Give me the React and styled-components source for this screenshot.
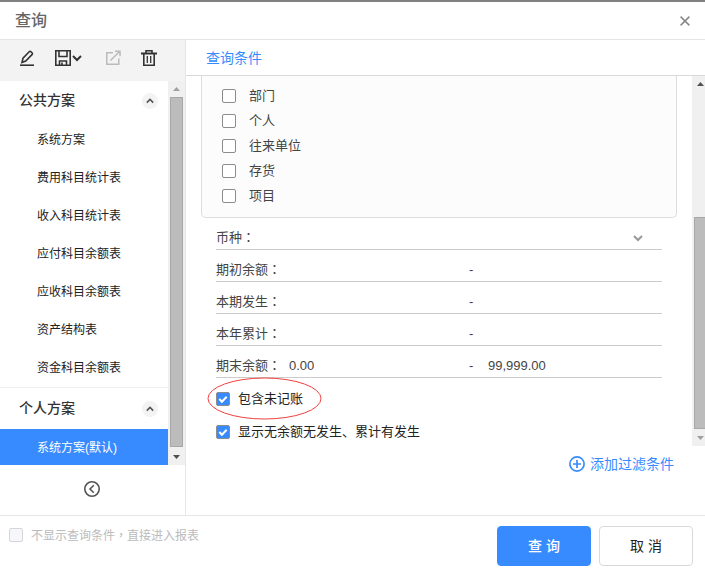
import { useState } from 'react'
import styled, { createGlobalStyle } from 'styled-components'


const GlobalStyle = createGlobalStyle`
    * {
        box-sizing: border-box;
    }

    body {
        margin: 0;
        font-family: 'Liberation Sans', 'Noto Sans CJK SC', sans-serif;
        font-size: 13px;
        line-height: 20px;
        color: #444;
        background-color: #fff;
    }

    button, input, select {
        font: inherit;
        color: inherit;
    }
`

const Dialog = styled.div`
    display: flex;
    flex-direction: column;
    height: 100vh;
    border-top: 2px solid #808080;
    overflow: hidden;
`

const Header = styled.header`
    display: flex;
    align-items: center;
    justify-content: space-between;
    height: 38px;
    padding: 0 15px;
    border-bottom: 1px solid #e6e6e6;
`

const Title = styled.h1`
    margin: 0;
    font-size: 16px;
    font-weight: 500;
    line-height: 24px;
    color: #666;
`

const IconButton = styled.button`
    display: flex;
    align-items: center;
    gap: 1px;
    padding: 0;
    border: 0;
    background: none;
    color: ${({$color}) => $color || '#333'};
    cursor: pointer;
`

const Body = styled.div`
    display: flex;
    flex: 1;
    min-height: 0;
`

const Sidebar = styled.aside`
    display: flex;
    flex-direction: column;
    width: 186px;
    flex-shrink: 0;
    border-right: 1px solid #e6e6e6;
`

const Toolbar = styled.div`
    display: flex;
    align-items: flex-start;
    gap: 20px;
    height: 41px;
    padding: 10px 19px;
    background-color: #f3f3f3;
`

const SaveButton = styled(IconButton)`
    padding-right: 3px;
`

const ScrollArea = styled.div`
    display: flex;
    flex: 1;
    min-height: 0;
`

const Plans = styled.nav`
    flex: 1;
    overflow: hidden;
`

const Group = styled.section`
    & + & {
        padding-top: 1px;
        border-top: 1px solid #eee;
    }
`

const GroupHeader = styled.div`
    display: flex;
    align-items: center;
    justify-content: space-between;
    height: 40px;
    padding: 0 10px 0 19px;
`

const GroupName = styled.h2`
    margin: 0;
    padding-bottom: 2px;
    font-size: 14px;
    font-weight: 500;
    color: #333;
`

const Toggle = styled(IconButton)`
    justify-content: center;
    width: 16px;
    height: 16px;
    border-radius: 50%;
    background-color: #f3f3f3;
`

const Plan = styled.a`
    display: block;
    padding-left: 37px;
    font-size: 12px;
    line-height: 38px;
    text-decoration: none;
    color: ${({$active}) => $active ? '#fff' : '#222'};
    background-color: ${({$active}) => $active ? '#388bff' : 'transparent'};
`

const Collapse = styled.div`
    display: flex;
    align-items: center;
    justify-content: center;
    height: 50px;
    padding: 0 2px 2px 0;
`

const Track = styled.div`
    display: flex;
    flex-direction: column;
    flex-shrink: 0;
    width: 17px;
    margin-right: ${({$cut}) => $cut ? '-4px' : '0'};
    background-color: #f0f0f0;
`

const Arrow = styled.span`
    display: flex;
    align-items: center;
    justify-content: center;
    height: 16px;
    color: ${({$muted}) => $muted ? '#a0a0a0' : '#505050'};
`

const Rail = styled.div`
    flex: ${({$space}) => $space};
`

const Thumb = styled.div`
    flex: ${({$size}) => $size};
    margin: 0 2px;
    border: 1px solid #a8a8a8;
    background-color: #bcbcbc;
`

const Main = styled.main`
    display: flex;
    flex-direction: column;
    flex: 1;
    min-width: 0;
`

const Tabs = styled.div`
    height: 36px;
    padding: 0 20px;
    border-bottom: 1px solid #d9d9d9;
`

const Tab = styled.button`
    padding: 0;
    border: 0;
    background: none;
    font-size: 14px;
    line-height: 36px;
    color: #388bff;
`

const Conditions = styled.form`
    flex: 1;
    min-width: 0;
    padding: 0 15px;
`

const Panel = styled.div`
    padding: 7px 20px 9px;
    border: 1px solid #ddd;
    border-top: 0;
    border-radius: 0 0 5px 5px;
    background-color: #fcfcfc;
`

const Check = styled.label`
    position: relative;
    display: flex;
    align-items: center;
    width: fit-content;
    gap: ${({$gap}) => $gap || '8px'};
    height: ${({$height}) => $height};
    font-size: ${({$size}) => $size || '13px'};
    color: ${({$color}) => $color || '#444'};
`

const Box = styled.input`
    appearance: none;
    width: 14px;
    height: 14px;
    margin: 0;
    border: 1px solid #8c8c8c;
    border-radius: 2px;
    background-color: #fff;

    &:checked {
        background: #388bff url("data:image/svg+xml,%3Csvg xmlns='http://www.w3.org/2000/svg' viewBox='0 0 12 12'%3E%3Cpath d='M2.3 6l2.6 2.7 4.8-5' fill='none' stroke='white' stroke-width='2'/%3E%3C/svg%3E") center / 12px no-repeat;
    }

    &:disabled {
        border-color: #d5d5d5;
        background-color: #f5f7fb;
    }
`

const Fields = styled.div`
    padding: 0 15px;
`

const Field = styled.div`
    display: grid;
    grid-template-columns: 73px ${({$range}) => $range ? '30fr 19px 29fr' : '1fr 29px'};
    align-items: center;
    height: 32px;
    padding-top: 8px;
    border-bottom: 1px solid #ccc;
`

const Input = styled.input`
    width: 100%;
    min-width: 0;
    height: 22px;
    padding: 0;
    border: 0;
    outline: 0;
    background: none;
`

const Select = styled.select`
    appearance: none;
    height: 22px;
    border: 0;
    outline: 0;
    background: none;
`

const Mark = styled.span`
    font-family: 'Noto Sans CJK TC', sans-serif;
`

const Options = styled.div`
    padding-top: 4px;
`

const Highlight = styled.svg`
    position: absolute;
    top: -5px;
    left: -9px;
    pointer-events: none;
`

const Extra = styled.div`
    display: flex;
    justify-content: flex-end;
    height: 69px;
    padding: 8px 31px;
`

const AddButton = styled(IconButton)`
    gap: 5px;
    height: 20px;
    font-size: 14px;
`

const Footer = styled.footer`
    display: flex;
    align-items: flex-start;
    justify-content: space-between;
    height: 59px;
    padding: 10px 12px 8px 9px;
    border-top: 1px solid #e6e6e6;
`

const Actions = styled.div`
    display: flex;
    gap: 8px;
`

const Button = styled.button`
    width: 94px;
    height: 40px;
    border: 1px solid ${({$primary}) => $primary ? '#388bff' : '#d9d9d9'};
    border-radius: 4px;
    font-size: 14px;
    font-weight: ${({$primary}) => $primary ? 500 : 400};
    color: ${({$primary}) => $primary ? '#fff' : '#222'};
    background-color: ${({$primary}) => $primary ? '#388bff' : '#fff'};
    cursor: pointer;
`

const groups = [
    {
        name: '公共方案',
        plans: ['系统方案', '费用科目统计表', '收入科目统计表', '应付科目余额表', '应收科目余额表', '资产结构表', '资金科目余额表']
    },
    {
        name: '个人方案',
        plans: ['系统方案(默认)']
    }
]

const dimensions = ['部门', '个人', '往来单位', '存货', '项目']

const ranges = [
    { id: 'opening', label: '期初余额', from: '', to: '' },
    { id: 'period', label: '本期发生', from: '', to: '' },
    { id: 'year', label: '本年累计', from: '', to: '' },
    { id: 'closing', label: '期末余额', from: '0.00', to: '99,999.00' }
]

const Chevron = ({up, width = 10, stroke = 2}) => (
    <svg width={width} height={width} viewBox="0 0 10 10" fill="none" stroke="currentColor" strokeWidth={stroke}>
        <path d={up ? 'M1 7l4-4 4 4' : 'M1 3l4 4 4-4'} />
    </svg>
)

const EditIcon = () => (
    <svg width="16" height="16" viewBox="0 0 16 16" fill="none" stroke="currentColor" strokeWidth="1.6">
        <path d="M3 12.4l1-4.2 6.2-6.4c.6-.6 1.2-.6 1.8 0l1 1c.6.6.6 1.2 0 1.8l-6.3 6.4z" />
        <path d="M1 15.2h14" strokeWidth="1.6" />
    </svg>
)

const SaveIcon = () => (
    <svg width="16" height="16" viewBox="0 0 16 16" fill="none" stroke="currentColor" strokeWidth="1.6">
        <path d="M.8.8h14.4v14.4H.8z M4 1v5.5h8V1 M4.5 15v-4h7v4" />
        <path d="M7 12.5v2.5" />
    </svg>
)

const ExportIcon = () => (
    <svg width="16" height="16" viewBox="0 0 16 16" fill="none" stroke="currentColor" strokeWidth="1.5">
        <path d="M8 2.8H1.8v11.4h12V8.5 M5.5 10.5l9-9 M10 1.3h5v5" />
    </svg>
)

const TrashIcon = () => (
    <svg width="16" height="16" viewBox="0 0 16 16" fill="none" stroke="currentColor">
        <path d="M0 3.5h16" strokeWidth="2" />
        <path d="M5 3V.8h6V3 M2.8 4v11.2h10.4V4" strokeWidth="1.6" />
        <path d="M6.3 6v7 M9.7 6v7" strokeWidth="1.3" />
    </svg>
)

const Scrollbar = ({before, size, after, upMuted, downMuted, cut}) => (
    <Track $cut={cut} aria-hidden="true">
        <Arrow $muted={upMuted}>
            <svg width="7" height="4" viewBox="0 0 7 4"><path d="M0 4l3.5-4L7 4z" fill="currentColor" /></svg>
        </Arrow>
        <Rail $space={before} />
        <Thumb $size={size} />
        <Rail $space={after} />
        <Arrow $muted={downMuted}>
            <svg width="7" height="4" viewBox="0 0 7 4"><path d="M0 0l3.5 4L7 0z" fill="currentColor" /></svg>
        </Arrow>
    </Track>
)

const App = () => {

    const [closed, setClosed] = useState([])
    const [active, setActive] = useState('系统方案(默认)')

    const handleToggle = (name) => {
        if (closed.includes(name)) {
            setClosed(closed.filter(value => value !== name))
            return
        }

        setClosed([...closed, name])
    }

    const handlePlan = (event, plan) => {
        event.preventDefault()
        setActive(plan)
    }

    return (
        <>
            <GlobalStyle />
            <Dialog role="dialog" aria-labelledby="title">
                <Header>
                    <Title id="title">查询</Title>
                    <IconButton $color="#888" aria-label="关闭">
                        <svg width="10" height="10" viewBox="0 0 10 10" stroke="currentColor" strokeWidth="1.5">
                            <path d="M.6.6l8.8 8.8 M9.4.6L.6 9.4" />
                        </svg>
                    </IconButton>
                </Header>
                <Body>
                    <Sidebar>
                        <Toolbar>
                            <IconButton aria-label="编辑"><EditIcon /></IconButton>
                            <SaveButton aria-label="保存"><SaveIcon /><Chevron /></SaveButton>
                            <IconButton $color="#bbb" aria-label="导出"><ExportIcon /></IconButton>
                            <IconButton aria-label="删除"><TrashIcon /></IconButton>
                        </Toolbar>
                        <ScrollArea>
                            <Plans>
                                {
                                    groups.map(group => (
                                        <Group key={group.name}>
                                            <GroupHeader>
                                                <GroupName>{group.name}</GroupName>
                                                <Toggle $color="#555" aria-label={group.name} onClick={() => handleToggle(group.name)}>
                                                    <Chevron up={!closed.includes(group.name)} width={8} />
                                                </Toggle>
                                            </GroupHeader>
                                            {
                                                !closed.includes(group.name) && group.plans.map(plan => (
                                                    <Plan href="#" key={plan} $active={plan === active} onClick={event => handlePlan(event, plan)}>{plan}</Plan>
                                                ))
                                            }
                                        </Group>
                                    ))
                                }
                            </Plans>
                            <Scrollbar before={0} size={350} after={2} upMuted />
                        </ScrollArea>
                        <Collapse>
                            <IconButton $color="#555" aria-label="收起">
                                <svg width="16" height="16" viewBox="0 0 16 16" fill="none" stroke="currentColor" strokeWidth="1.6">
                                    <circle cx="8" cy="8" r="7.2" />
                                    <path d="M9.8 4.2L6 8l3.8 3.8" />
                                </svg>
                            </IconButton>
                        </Collapse>
                    </Sidebar>
                    <Main>
                        <Tabs>
                            <Tab>查询条件</Tab>
                        </Tabs>
                        <ScrollArea>
                            <Conditions>
                                <Panel>
                                    {
                                        dimensions.map(name => (
                                            <Check key={name} $height="25px" $gap="13px">
                                                <Box type="checkbox" />
                                                {name}
                                            </Check>
                                        ))
                                    }
                                </Panel>
                                <Fields>
                                    <Field>
                                        <label htmlFor="currency">币种<Mark>：</Mark></label>
                                        <Select id="currency"><option></option></Select>
                                        <IconButton as="span" $color="#999"><Chevron /></IconButton>
                                    </Field>
                                    {
                                        ranges.map(range => (
                                            <Field key={range.id} $range>
                                                <label htmlFor={range.id}>{range.label}<Mark>：</Mark></label>
                                                <Input id={range.id} defaultValue={range.from} />
                                                <span>-</span>
                                                <Input aria-label={range.label} defaultValue={range.to} />
                                            </Field>
                                        ))
                                    }
                                    <Options>
                                        <Check $height="33px" $color="#222">
                                            <Box type="checkbox" defaultChecked />
                                            包含未记账
                                            <Highlight width="115" height="43" viewBox="0 0 115 43" fill="none" stroke="#f04040">
                                                <ellipse cx="57.5" cy="21.5" rx="56.5" ry="20.5" />
                                            </Highlight>
                                        </Check>
                                        <Check $height="33px" $color="#222">
                                            <Box type="checkbox" defaultChecked />
                                            显示无余额无发生、累计有发生
                                        </Check>
                                    </Options>
                                </Fields>
                            </Conditions>
                            <Scrollbar before={126} size={211} after={1} downMuted cut />
                        </ScrollArea>
                        <Extra>
                            <AddButton $color="#388bff">
                                <svg width="16" height="16" viewBox="0 0 16 16" fill="none" stroke="currentColor" strokeWidth="1.7">
                                    <circle cx="8" cy="8" r="7.1" />
                                    <path d="M8 4v8 M4 8h8" />
                                </svg>
                                添加过滤条件
                            </AddButton>
                        </Extra>
                    </Main>
                </Body>
                <Footer>
                    <Check $height="18px" $size="12px" $color="#bbb">
                        <Box type="checkbox" disabled />
                        <span>不显示查询条件<Mark>，</Mark>直接进入报表</span>
                    </Check>
                    <Actions>
                        <Button $primary>查 询</Button>
                        <Button>取 消</Button>
                    </Actions>
                </Footer>
            </Dialog>
        </>
    )
}

export default App
